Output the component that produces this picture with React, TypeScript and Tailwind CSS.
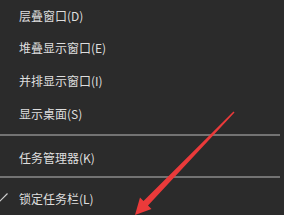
import type { ReactNode } from "react";

const FONT = { fontFamily: '"Microsoft YaHei", "Noto Sans CJK SC", "Noto Sans", sans-serif' };

function MenuItem({ label, height, checked }: { label: string; height: string; checked?: boolean }) {
  return (
    <div className={`flex items-center ${height} ${checked ? "" : "pl-[19px]"}`}>
      {checked && (
        <svg className="w-[12px] h-[12px] -ml-[4px] mr-[11px] mt-[-2px]" viewBox="0 0 12 12" fill="none">
          <path d="M1 7 L3.5 9.5 L11.5 1.5" stroke="#cfcfcf" strokeWidth="1.2" />
        </svg>
      )}
      <span className="text-[12px] leading-none text-[#dedede]">{label}</span>
    </div>
  );
}

function Divider({ className }: { className?: string }) {
  return <div className={`h-[2px] mr-[4px] bg-[#737373] ${className ?? ""}`} />;
}

function Arrow(): ReactNode {
  // 红色箭头（覆盖在菜单上方）
  return (
    <svg className="absolute inset-0 pointer-events-none" width="284" height="215" viewBox="0 0 284 215">
      <polygon
        points="234.5,112.5 148,205.5 151.5,209 135,215 140,197.5 143.5,201 233.5,111.5"
        fill="#ea3a3a"
      />
    </svg>
  );
}

export default function App() {
  return (
    <div className="relative w-[284px] h-[215px] overflow-hidden bg-[#2b2b2b]" style={FONT}>
      <div className="flex flex-col">
        <MenuItem label="层叠窗口(D)" height="h-[31px]" />
        <MenuItem label="堆叠显示窗口(E)" height="h-[33px]" />
        <MenuItem label="并排显示窗口(I)" height="h-[33px]" />
        <MenuItem label="显示桌面(S)" height="h-[33px]" />
        <div className="pt-[4px] pb-[5px]">
          <Divider />
        </div>
        <MenuItem label="任务管理器(K)" height="h-[33px]" />
        <div className="pt-[2px] pb-[4px]">
          <Divider />
        </div>
        <MenuItem label="锁定任务栏(L)" height="h-[33px]" checked />
      </div>
      <Arrow />
    </div>
  );
}
